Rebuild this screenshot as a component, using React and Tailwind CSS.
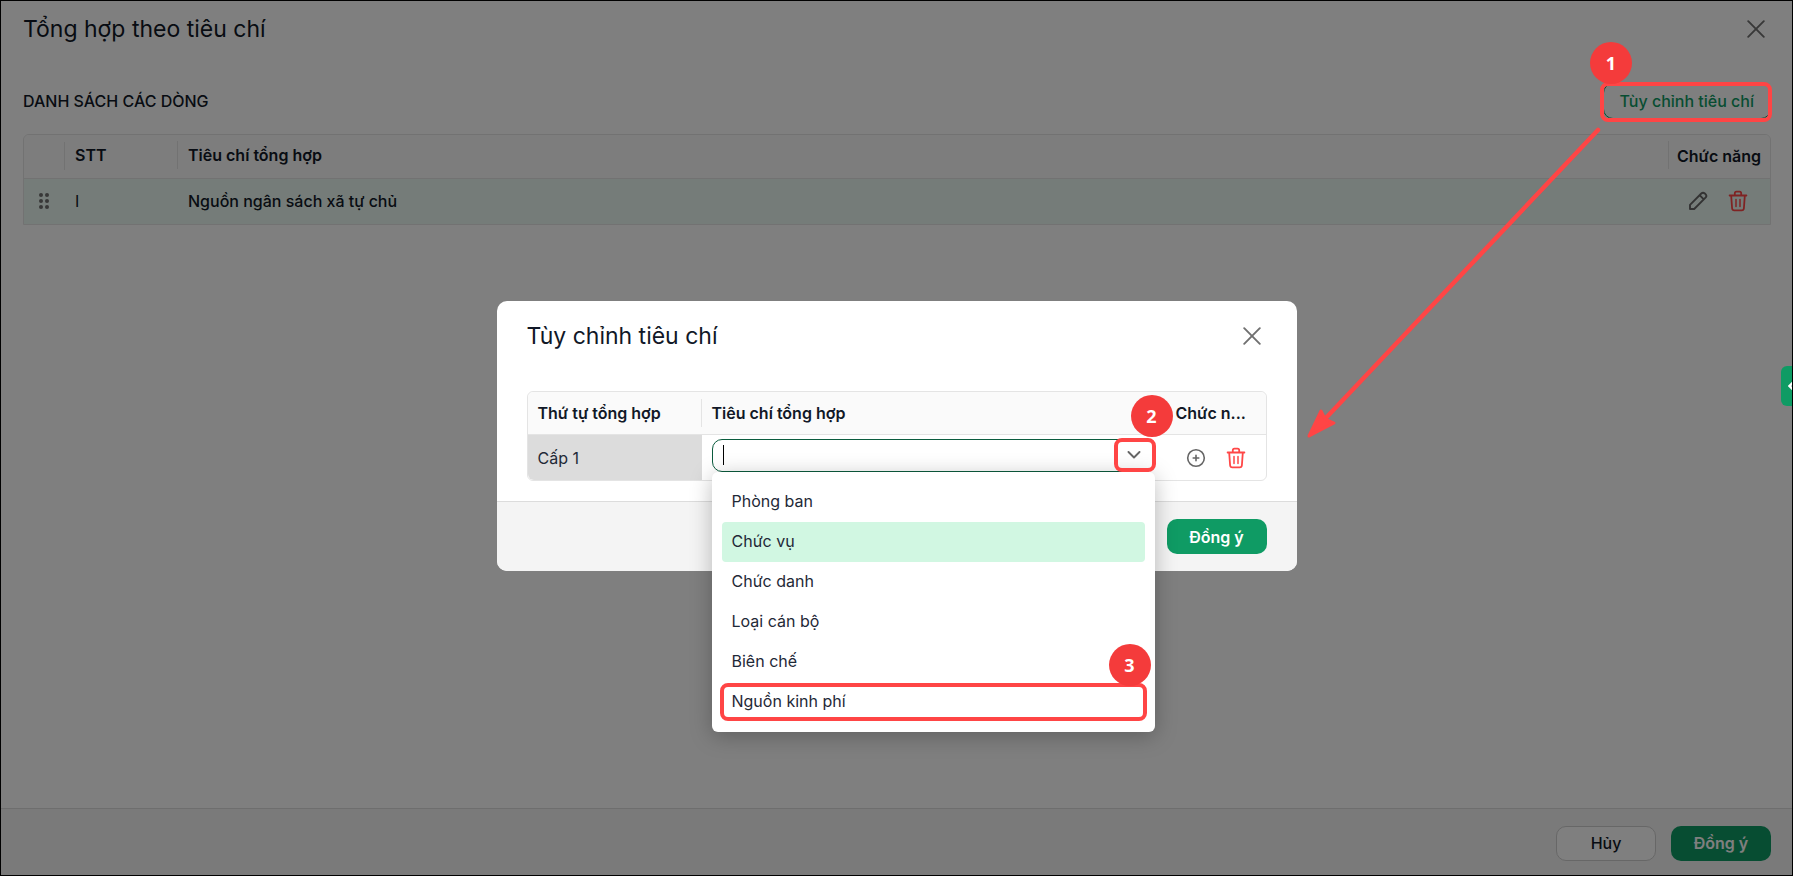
import React, { useState } from "react";

const CRITERIA = [
  "Phòng ban",
  "Chức vụ",
  "Chức danh",
  "Loại cán bộ",
  "Biên chế",
  "Nguồn kinh phí",
];

function CloseIcon() {
  return (
    <svg viewBox="0 0 18 18" className="size-[18px]" fill="none" stroke="#707070" strokeWidth="1.9" strokeLinecap="round" aria-hidden="true">
      <path d="M1.2 1.2 16.8 16.8M16.8 1.2 1.2 16.8" />
    </svg>
  );
}

function TrashIcon() {
  return (
    <svg viewBox="0 0 20 22" className="h-[22px] w-5" fill="none" stroke="#ff4747" strokeWidth="1.8" strokeLinecap="round" strokeLinejoin="round" aria-hidden="true">
      <path d="M1.6 5.500h16.8M6.8 5.300V3.200c0-1 .6-1.600 1.600-1.600h3.200c1 0 1.600.6 1.600 1.600v2.100M3.200 5.700l.9 12.600c.1 1.300.9 2.100 2.200 2.100h7.400c1.300 0 2.100-.8 2.200-2.100l.9-12.600" />
      <path d="M8 9.600v6.800M12 9.600v6.800" strokeWidth="1.5" />
    </svg>
  );
}

function PencilIcon() {
  return (
    <svg viewBox="0 0 20 20" className="size-5" fill="none" stroke="#666666" strokeWidth="1.9" strokeLinejoin="round" aria-hidden="true">
      <path d="M2 18v-4.200L13.300 2.500a2.500 2.500 0 0 1 3.500 0l.7.7a2.500 2.500 0 0 1 0 3.500L6.200 18ZM11.600 4.200l4.200 4.200" />
    </svg>
  );
}

function PlusCircleIcon() {
  return (
    <svg viewBox="0 0 20 20" className="size-5" fill="none" stroke="#666666" strokeWidth="1.6" strokeLinecap="round" aria-hidden="true">
      <circle cx="10" cy="10" r="8.3" />
      <path d="M10 7.200v5.600M7.200 10h5.600" />
    </svg>
  );
}

function GripIcon() {
  return (
    <svg viewBox="0 0 12 18" className="h-[18px] w-3" fill="#707070" aria-hidden="true">
      <circle cx="3" cy="3" r="2" />
      <circle cx="9" cy="3" r="2" />
      <circle cx="3" cy="9" r="2" />
      <circle cx="9" cy="9" r="2" />
      <circle cx="3" cy="15" r="2" />
      <circle cx="9" cy="15" r="2" />
    </svg>
  );
}

function Step({ children, className }) {
  return (
    <span className={`absolute z-20 flex size-[42px] items-center justify-center rounded-full bg-[#f43b3b] font-['Open_Sans',sans-serif] text-lg font-bold text-white ${className}`}>
      {children}
    </span>
  );
}

function Highlight({ className }) {
  return <span className={`pointer-events-none absolute z-10 rounded-lg border-4 border-[#ff4545] ${className}`} />;
}

function MainView() {
  return (
    <div className="flex flex-1 flex-col">
      <header className="flex items-center justify-between pt-3 pr-[21px] pl-[22px]">
        <h1 className="text-[23px] leading-8">Tổng hợp theo tiêu chí</h1>
        <button type="button" aria-label="Đóng" className="mr-1.5">
          <CloseIcon />
        </button>
      </header>
      <main className="flex-1 pt-[38px] pr-[21px] pl-[22px]">
        <div className="flex items-center justify-between">
          <h2 className="text-base font-medium">DANH SÁCH CÁC DÒNG</h2>
          <button type="button" className="h-9 rounded-[10px] border border-[#0f9b64] bg-white px-4 font-medium text-[#0f9b64]">
            Tùy chỉnh tiêu chí
          </button>
        </div>
        <div className="mt-[15px] overflow-hidden rounded-t-md border border-[#e4e4e4]">
          <table className="w-full table-fixed border-collapse text-left">
            <colgroup>
              <col className="w-[41px]" />
              <col className="w-[113px]" />
              <col />
              <col className="w-[101px]" />
            </colgroup>
            <thead>
              <tr className="h-[43px] bg-[#fafafa]">
                <th aria-label="Sắp xếp" className="p-0">
                  <div className="h-7 border-r border-[#e4e4e4]" />
                </th>
                <th className="p-0 pb-0.5 font-semibold">
                  <div className="h-7 border-r border-[#e4e4e4] pl-2.5 leading-7">STT</div>
                </th>
                <th className="p-0 pb-0.5 font-semibold">
                  <div className="h-7 border-r border-[#e4e4e4] pl-2.5 leading-7">Tiêu chí tổng hợp</div>
                </th>
                <th className="p-0 pl-2 font-semibold">
                  <div className="leading-7 whitespace-nowrap">Chức năng</div>
                </th>
              </tr>
            </thead>
            <tbody>
              <tr className="h-[46px] border-t border-[#e4e4e4] bg-[#eaf8f2]">
                <td className="p-0 pl-[14px]">
                  <GripIcon />
                </td>
                <td className="p-0 pl-2.5">I</td>
                <td className="p-0 pl-2.5 font-medium">Nguồn ngân sách xã tự chủ</td>
                <td className="p-0">
                  <div className="flex items-center gap-5 pl-[19px]">
                    <button type="button" aria-label="Sửa">
                      <PencilIcon />
                    </button>
                    <button type="button" aria-label="Xóa">
                      <TrashIcon />
                    </button>
                  </div>
                </td>
              </tr>
            </tbody>
          </table>
        </div>
      </main>
      <footer className="flex justify-end gap-[15px] border-t border-[#dcdcdc] bg-[#f4f4f4] px-[21px] pt-[17px] pb-[14px]">
        <button type="button" className="h-[35px] w-[100px] rounded-[10px] border border-[#cfcfcf] bg-white pb-0.5 font-medium">
          Hủy
        </button>
        <button type="button" className="h-[35px] w-[100px] rounded-[10px] bg-[#0f9b64] pb-0.5 font-semibold text-white">
          Đồng ý
        </button>
      </footer>
    </div>
  );
}

function CriteriaSelect() {
  const [value, setValue] = useState("");
  return (
    <div className="relative">
      <div className="flex h-[33px] items-center overflow-hidden rounded-[10px] border border-[#0b5c3e] bg-white">
        <span className="ml-2.5 h-5 w-px bg-black" />
        <input
          role="combobox"
          aria-labelledby="criteria-label"
          aria-expanded="true"
          aria-controls="criteria-list"
          value={value}
          onChange={(e) => setValue(e.target.value)}
          className="h-full min-w-0 flex-1 bg-transparent outline-none"
        />
        <button type="button" aria-label="Mở danh sách" className="flex h-full w-10 items-center justify-center">
          <svg viewBox="0 0 14 8" className="h-2 w-3.5" fill="none" stroke="#666666" strokeWidth="1.9" strokeLinecap="round" strokeLinejoin="round" aria-hidden="true">
            <path d="M1.500 1 7 6.500 12.500 1" />
          </svg>
        </button>
      </div>
      <Highlight className="-top-px -right-px h-[34px] w-[42px]" />
      <Step className="-top-11 -right-[18px]">2</Step>
      <ul
        id="criteria-list"
        role="listbox"
        aria-labelledby="criteria-label"
        className="absolute inset-x-0 top-full rounded-md bg-white p-2.5 text-[#1f2937] shadow-[0_4px_22px_rgba(0,0,0,0.26)]"
      >
        {CRITERIA.map((name) => (
          <li
            key={name}
            role="option"
            aria-selected={name === "Chức vụ"}
            onClick={() => setValue(name)}
            className="relative h-10 rounded px-2.5 leading-[38px] aria-selected:bg-[#d1f7e2]"
          >
            {name}
            {name === "Nguồn kinh phí" && (
              <>
                <Highlight className="-inset-x-0.5 inset-y-px" />
                <Step className="-top-[38px] -right-1.5">3</Step>
              </>
            )}
          </li>
        ))}
      </ul>
    </div>
  );
}

function CriteriaDialog() {
  return (
    <section role="dialog" aria-labelledby="dialog-title" className="w-[800px] rounded-[10px] bg-white">
      <header className="flex items-center justify-between pt-[19px] pr-9 pl-[30px]">
        <h2 id="dialog-title" className="text-[23px] leading-8">
          Tùy chỉnh tiêu chí
        </h2>
        <button type="button" aria-label="Đóng">
          <CloseIcon />
        </button>
      </header>
      <div className="px-[30px] pt-[39px] pb-5">
        <div className="rounded-md border border-[#e4e4e4]">
          <table className="w-full table-fixed border-collapse text-left">
            <colgroup>
              <col className="w-[174px]" />
              <col />
              <col className="w-[101px]" />
            </colgroup>
            <thead>
              <tr className="h-[42px]">
                <th className="rounded-tl-md bg-[#fafafa] p-0 font-semibold">
                  <div className="h-7 border-r border-[#e4e4e4] pl-2.5 leading-7">Thứ tự tổng hợp</div>
                </th>
                <th id="criteria-label" className="bg-[#fafafa] p-0 font-semibold">
                  <div className="h-7 border-r border-[#e4e4e4] pl-2.5 leading-7">Tiêu chí tổng hợp</div>
                </th>
                <th className="rounded-tr-md bg-[#fafafa] p-0 font-semibold">
                  <div className="truncate pr-3 pl-[11px] leading-7">Chức n...</div>
                </th>
              </tr>
            </thead>
            <tbody>
              <tr className="h-[46px] border-t border-[#e4e4e4]">
                <td className="rounded-bl-md bg-[#dcdcdc] p-0 pt-0.5 pl-2.5 text-[#1f2937]">Cấp 1</td>
                <td className="p-0 px-2.5 pb-1">
                  <CriteriaSelect />
                </td>
                <td className="p-0 pt-0.5">
                  <div className="flex items-center gap-5 pl-[21px]">
                    <button type="button" aria-label="Thêm">
                      <PlusCircleIcon />
                    </button>
                    <button type="button" aria-label="Xóa">
                      <TrashIcon />
                    </button>
                  </div>
                </td>
              </tr>
            </tbody>
          </table>
        </div>
      </div>
      <footer className="flex justify-end rounded-b-[10px] border-t border-[#dcdcdc] bg-[#f4f4f4] px-[30px] py-[17px]">
        <button type="button" className="h-[35px] w-[100px] rounded-[10px] bg-[#0f9b64] font-semibold text-white">
          Đồng ý
        </button>
      </footer>
    </section>
  );
}

export default function App() {
  return (
    <div className="relative flex min-h-screen flex-col overflow-hidden border border-black bg-white font-['Inter',sans-serif] text-base text-[#111827]">
      <MainView />
      <div className="absolute inset-0 flex items-center justify-center bg-black/50 pb-1">
        <CriteriaDialog />
      </div>
      <button
        type="button"
        aria-label="Mở bảng bên"
        className="absolute top-[365px] right-0 flex h-10 w-[11px] items-center overflow-hidden rounded-l-md bg-[#0f9b64] pl-[7px]"
      >
        <svg viewBox="0 0 6 10" className="h-2.5 w-1.5 shrink-0" fill="none" stroke="white" strokeWidth="2.500" aria-hidden="true">
          <path d="M5.500 1 1.500 5l4 4" />
        </svg>
      </button>
      <Highlight className="top-[81px] right-5 h-10 w-[172px]" />
      <Step className="top-[41px] right-[160px]">1</Step>
      <svg viewBox="0 0 300 320" className="pointer-events-none absolute top-[122px] right-[188px] h-80 w-[300px]" aria-hidden="true">
        <path d="M294 7 20 297" stroke="#ff4545" strokeWidth="4.500" strokeLinecap="round" />
        <path d="M5 313 17 288 21 296 30 300Z" fill="#ff4545" stroke="#ff4545" strokeWidth="3" strokeLinejoin="round" />
      </svg>
    </div>
  );
}
